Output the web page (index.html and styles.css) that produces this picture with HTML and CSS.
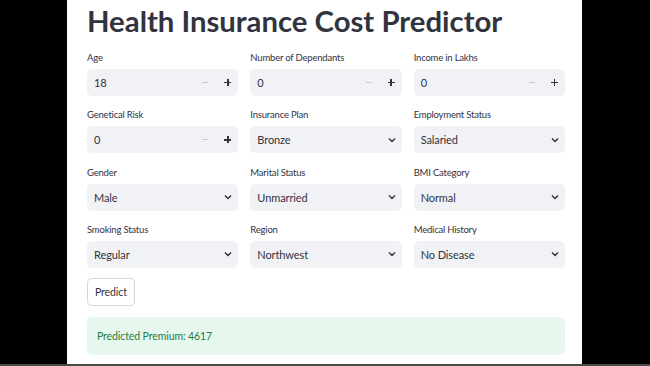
FILE: index.html
```html
<!DOCTYPE html>
<html>
<head>
<meta charset="utf-8">
<link rel="stylesheet" href="styles.css">
</head>
<body>
<div class="frame">
  <main class="app">
    <h1 class="title">Health Insurance Cost Predictor</h1>
    <div class="grid">
      <div class="field"><label class="label">Age</label>
        <div class="box"><span class="val">18</span><span class="minus"></span><span class="plus"></span></div></div>
      <div class="field"><label class="label">Number of Dependants</label>
        <div class="box"><span class="val">0</span><span class="minus"></span><span class="plus"></span></div></div>
      <div class="field"><label class="label">Income in Lakhs</label>
        <div class="box"><span class="val">0</span><span class="minus"></span><span class="plus"></span></div></div>

      <div class="field"><label class="label">Genetical Risk</label>
        <div class="box"><span class="val">0</span><span class="minus"></span><span class="plus"></span></div></div>
      <div class="field"><label class="label">Insurance Plan</label>
        <div class="box select"><span class="val">Bronze</span><svg class="chev" viewBox="0 0 10 6"><path d="M1.2 1.2 L5 4.8 L8.8 1.2"/></svg></div></div>
      <div class="field"><label class="label">Employment Status</label>
        <div class="box select"><span class="val">Salaried</span><svg class="chev" viewBox="0 0 10 6"><path d="M1.2 1.2 L5 4.8 L8.8 1.2"/></svg></div></div>

      <div class="field"><label class="label">Gender</label>
        <div class="box select"><span class="val">Male</span><svg class="chev" viewBox="0 0 10 6"><path d="M1.2 1.2 L5 4.8 L8.8 1.2"/></svg></div></div>
      <div class="field"><label class="label">Marital Status</label>
        <div class="box select"><span class="val">Unmarried</span><svg class="chev" viewBox="0 0 10 6"><path d="M1.2 1.2 L5 4.8 L8.8 1.2"/></svg></div></div>
      <div class="field"><label class="label">BMI Category</label>
        <div class="box select"><span class="val">Normal</span><svg class="chev" viewBox="0 0 10 6"><path d="M1.2 1.2 L5 4.8 L8.8 1.2"/></svg></div></div>

      <div class="field"><label class="label">Smoking Status</label>
        <div class="box select"><span class="val">Regular</span><svg class="chev" viewBox="0 0 10 6"><path d="M1.2 1.2 L5 4.8 L8.8 1.2"/></svg></div></div>
      <div class="field"><label class="label">Region</label>
        <div class="box select"><span class="val">Northwest</span><svg class="chev" viewBox="0 0 10 6"><path d="M1.2 1.2 L5 4.8 L8.8 1.2"/></svg></div></div>
      <div class="field"><label class="label">Medical History</label>
        <div class="box select"><span class="val">No Disease</span><svg class="chev" viewBox="0 0 10 6"><path d="M1.2 1.2 L5 4.8 L8.8 1.2"/></svg></div></div>
    </div>
    <button class="btn">Predict</button>
    <div class="success">Predicted Premium: 4617</div>
  </main>
</div>
<div class="bottom"></div>
</body>
</html>
```

FILE: styles.css
```css
html, body {
  margin: 0;
  padding: 0;
  background: #000;
  width: 650px;
  height: 366px;
  overflow: hidden;
  font-family: "Lato", "Noto Sans", sans-serif;
  color: #31333f;
}
.frame {
  display: flex;
  justify-content: flex-start;
  height: 364px;
}
.app {
  margin-left: 67px;
  width: 515px;
  height: 364px;
  background: #fff;
  box-sizing: border-box;
  padding: 0 17px 0 20px;
}
.bottom {
  height: 2px;
  background: #4a4a4a;
}
.title {
  margin: 0 0 9px 0;
  padding-top: 1px;
  font-size: 29.3px;
  line-height: 40px;
  font-weight: 700;
  color: #31333f;
  letter-spacing: 0;
}
.grid {
  display: grid;
  grid-template-columns: repeat(3, 1fr);
  column-gap: 12px;
  row-gap: 11.33px;
}
.field {
  display: flex;
  flex-direction: column;
}
.label {
  height: 16px;
  line-height: 16px;
  font-size: 9.5px;
  letter-spacing: -0.2px;
  margin-bottom: 3px;
  color: #31333f;
}
.box {
  height: 27px;
  background: #f0f2f6;
  border-radius: 5px;
  display: flex;
  align-items: center;
  padding-left: 7px;
  font-size: 11px;
  letter-spacing: -0.1px;
  position: relative;
}
.val {
  flex: 1;
}
.minus {
  width: 6px;
  height: 1px;
  background: #c9cbd0;
  margin-right: 16px;
}
.plus {
  width: 7px;
  height: 7px;
  margin-right: 7px;
  position: relative;
}
.plus::before, .plus::after {
  content: "";
  position: absolute;
  background: #31333f;
}
.plus::before {
  left: 0; top: 3px; width: 7px; height: 1.4px;
}
.plus::after {
  left: 2.8px; top: 0; width: 1.4px; height: 7px;
}
.chev {
  width: 8px;
  height: 6px;
  margin-right: 6px;
  fill: none;
  stroke: #31333f;
  stroke-width: 1.8;
}
.btn {
  margin-top: 10px;
  height: 28px;
  padding: 0 7px;
  background: #fff;
  border: 1px solid rgba(49, 51, 63, 0.2);
  border-radius: 5px;
  font-family: inherit;
  font-size: 10.5px;
  letter-spacing: -0.1px;
  color: #31333f;
  display: block;
}
.success {
  margin-top: 11px;
  height: 38px;
  line-height: 38px;
  background: #e6f8ee;
  border-radius: 5px;
  padding-left: 10px;
  color: #1f7a48;
  font-size: 10.5px;
  letter-spacing: -0.1px;
}
```
